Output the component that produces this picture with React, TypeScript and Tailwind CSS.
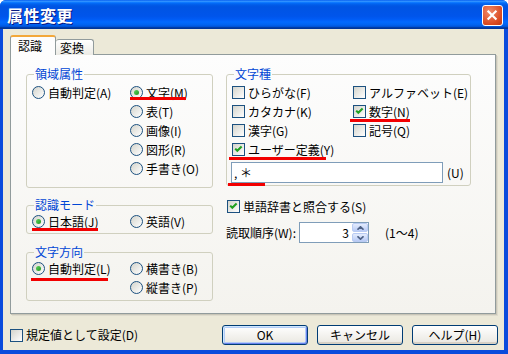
import React from "react";

function Radio({ checked }: { checked?: boolean }) {
  return (
    <span className="flex h-[13px] w-[13px] shrink-0 items-center justify-center rounded-full border border-[#1C5180] bg-linear-to-br from-[#D4D4CC] to-white">
      {checked && (
        <span className="h-[5px] w-[5px] rounded-full bg-linear-to-br from-[#5FD35F] to-[#1E961E]" />
      )}
    </span>
  );
}

function Check({ checked }: { checked?: boolean }) {
  return (
    <span className="flex h-[13px] w-[13px] shrink-0 items-center justify-center border border-[#1C5180] bg-linear-to-br from-[#D4D4CC] to-white">
      {checked && (
        <svg width="11" height="11" viewBox="0 0 11 11">
          <path d="M2.2 4.6 L4.3 6.8 L8.6 2.4" stroke="#21A121" strokeWidth="2.1" fill="none" />
        </svg>
      )}
    </span>
  );
}

function Opt({
  type,
  checked,
  label,
  ul,
}: {
  type: "r" | "c";
  checked?: boolean;
  label: string;
  ul?: string;
}) {
  return (
    <div className="relative flex h-[19px] items-center gap-[3px] whitespace-nowrap">
      {type === "r" ? <Radio checked={checked} /> : <Check checked={checked} />}
      <span className="leading-[14px]">{label}</span>
      {ul && <span className={`absolute h-[3px] bg-[#F20000] ${ul}`} />}
    </div>
  );
}

function Group({
  label,
  labelBg,
  className,
  children,
}: {
  label: string;
  labelBg: string;
  className: string;
  children: React.ReactNode;
}) {
  return (
    <div className={`relative rounded-[3px] border border-[#D0D0BF] ${className}`}>
      <span className={`absolute -top-[8px] left-[7px] px-[1px] leading-[14px] text-[#0046D5] ${labelBg}`}>
        {label}
      </span>
      {children}
    </div>
  );
}

function SpinBtn({ up }: { up?: boolean }) {
  return (
    <div className="flex flex-1 items-center justify-center rounded-[2px] border border-[#B9CBF3] bg-linear-to-b from-[#E4ECFD] to-[#B8CAF5]">
      <svg width="7" height="4" viewBox="0 0 7 4">
        <path
          d={up ? "M0.5 3.7 L3.5 0.8 L6.5 3.7" : "M0.5 0.3 L3.5 3.2 L6.5 0.3"}
          stroke="#4D6185"
          strokeWidth="1.6"
          fill="none"
        />
      </svg>
    </div>
  );
}

function Btn({ label, def }: { label: string; def?: boolean }) {
  return (
    <div
      className={`flex h-[20px] w-[86px] items-center justify-center rounded-[3px] border border-[#003C74] bg-linear-to-b from-white to-[#E9E7E0] leading-[14px] ${
        def
          ? "shadow-[inset_1px_1px_0_#CEE7FF,inset_-1px_-1px_0_#6982EE,inset_0_0_0_2px_#B3CCF6]"
          : "shadow-[inset_0_-2px_0_#D6D0C5]"
      }`}
    >
      {label}
    </div>
  );
}

export default function App() {
  return (
    <div className="flex h-[354px] w-[508px] flex-col overflow-hidden rounded-t-[6px] bg-[#0A4BDC] font-['Noto_Sans_CJK_JP','Noto_Sans_CJK_SC',sans-serif] text-[12px] text-black">
      {/* title bar */}
      <div className="flex h-[29px] shrink-0 items-start justify-between bg-[linear-gradient(to_bottom,#0058EE_0%,#3593FF_4%,#288EFF_6%,#127DFF_8%,#036FFC_10%,#0262EE_14%,#0057E5_20%,#0054E3_24%,#0055EB_56%,#005BF5_66%,#026AFE_76%,#0062EF_86%,#0052D6_92%,#0040AB_94%,#003092_100%)] pl-[7px] pr-[5px]">
        <div className="mt-[6px] text-[16px] font-bold leading-[18px] tracking-[0.5px] text-white [text-shadow:1px_1px_0_#0A1883]">
          属性変更
        </div>
        <div className="mt-[5px] flex h-[21px] w-[21px] items-center justify-center rounded-[3px] border border-white bg-[radial-gradient(circle_at_35%_30%,#F08A6A,#D9481F_70%,#B93A18)]">
          <svg width="21" height="21" viewBox="0 0 21 21">
            <path d="M6 6 L14 14 M14 6 L6 14" stroke="white" strokeWidth="2.4" strokeLinecap="square" />
          </svg>
        </div>
      </div>

      {/* body */}
      <div className="mb-[4px] ml-[3px] mr-[4px] flex flex-1 flex-col bg-[#ECE9D8] pl-[7px] pr-[6px]">
        {/* tabs */}
        <div className="relative z-10 mt-[6px] -mb-px flex items-end">
          <div className="flex h-[20px] w-[46px] items-center rounded-t-[3px] border-x border-t-2 border-x-[#919B9C] border-t-[#F3A83A] bg-[#FDFDFD] pl-[7px] leading-[14px]">
            認識
          </div>
          <div className="flex h-[16px] w-[38px] items-center rounded-t-[3px] border-r border-t border-[#919B9C] bg-linear-to-b from-white to-[#ECEBE5] pl-[4px] leading-[14px]">
            変換
          </div>
        </div>

        {/* panel */}
        <div className="flex h-[260px] w-[486px] gap-[13px] border border-[#919B9C] bg-linear-to-b from-[#FDFDFD] to-[#F4F3EE] pl-[15px] pt-[19px] shadow-[1px_1px_0_#C9C6B8,2px_2px_0_#DEDBCD]">
          {/* left column */}
          <div className="flex w-[187px] flex-col gap-[16px]">
            <Group label="領域属性" labelBg="bg-[#FCFCFC]" className="pb-[9px] pt-[8px]">
              <div className="grid grid-cols-[98px_1fr] pl-[5px]">
                <div>
                  <Opt type="r" label="自動判定(A)" />
                </div>
                <div className="flex flex-col">
                  <Opt type="r" checked label="文字(M)" ul="left-0 top-[14px] w-[56px]" />
                  <Opt type="r" label="表(T)" />
                  <Opt type="r" label="画像(I)" />
                  <Opt type="r" label="図形(R)" />
                  <Opt type="r" label="手書き(O)" />
                </div>
              </div>
            </Group>
            <Group label="認識モード" labelBg="bg-[#F8F7F4]" className="mt-[1px] pb-[2px] pt-[6px]">
              <div className="grid grid-cols-[98px_1fr] pl-[5px]">
                <Opt type="r" checked label="日本語(J)" ul="left-0 top-[16px] w-[66px]" />
                <Opt type="r" label="英語(V)" />
              </div>
            </Group>
            <Group label="文字方向" labelBg="bg-[#F6F5F2]" className="mt-[2px] pb-[3px] pt-[6px]">
              <div className="grid grid-cols-[98px_1fr] pl-[5px]">
                <div>
                  <Opt type="r" checked label="自動判定(L)" ul="-left-[1px] top-[19px] w-[77px]" />
                </div>
                <div className="flex flex-col">
                  <Opt type="r" label="横書き(B)" />
                  <Opt type="r" label="縦書き(P)" />
                </div>
              </div>
            </Group>
          </div>

          {/* right column */}
          <div className="flex w-[245px] flex-col">
            <Group label="文字種" labelBg="bg-[#FCFCFC]" className="pb-[2px] pt-[8px]">
              <div className="grid grid-cols-[121px_1fr] pl-[5px]">
                <Opt type="c" label="ひらがな(F)" />
                <Opt type="c" label="アルファベット(E)" />
                <Opt type="c" label="カタカナ(K)" />
                <Opt type="c" checked label="数字(N)" ul="-left-[3px] top-[17px] w-[60px]" />
                <Opt type="c" label="漢字(G)" />
                <Opt type="c" label="記号(Q)" />
                <Opt type="c" checked label="ユーザー定義(Y)" ul="-left-[3px] top-[17px] w-[97px]" />
              </div>
              <div className="mt-[3px] flex items-center gap-[4px] pl-[4px]">
                <div className="relative flex h-[21px] w-[212px] items-center border border-[#7F9DB9] bg-white pl-[2px] leading-[14px]">
                  , ＊
                  <span className="absolute -left-[4px] top-[20px] h-[3px] w-[37px] bg-[#F20000]" />
                </div>
                <span className="leading-[14px]">(U)</span>
              </div>
            </Group>
            <div className="mt-[11px] pl-[1px]">
              <Opt type="c" checked label="単語辞書と照合する(S)" />
            </div>
            <div className="mt-[6px] flex items-center">
              <span className="w-[73px] leading-[14px]">読取順序(W):</span>
              <div className="flex h-[21px] w-[70px] border border-[#7F9DB9] bg-white">
                <div className="flex-1 pr-[3px] text-right leading-[19px]">3</div>
                <div className="flex w-[16px] flex-col gap-[1px]">
                  <SpinBtn up />
                  <SpinBtn />
                </div>
              </div>
              <span className="ml-[16px] leading-[14px]">(1～4)</span>
            </div>
          </div>
        </div>

        {/* bottom row */}
        <div className="mt-[11px] flex h-[20px] items-center justify-between">
          <div className="flex items-center gap-[3px]">
            <Check />
            <span className="leading-[14px]">規定値として設定(D)</span>
          </div>
          <div className="flex gap-[9px]">
            <Btn label="OK" def />
            <Btn label="キャンセル" />
            <Btn label="ヘルプ(H)" />
          </div>
        </div>
      </div>
    </div>
  );
}
